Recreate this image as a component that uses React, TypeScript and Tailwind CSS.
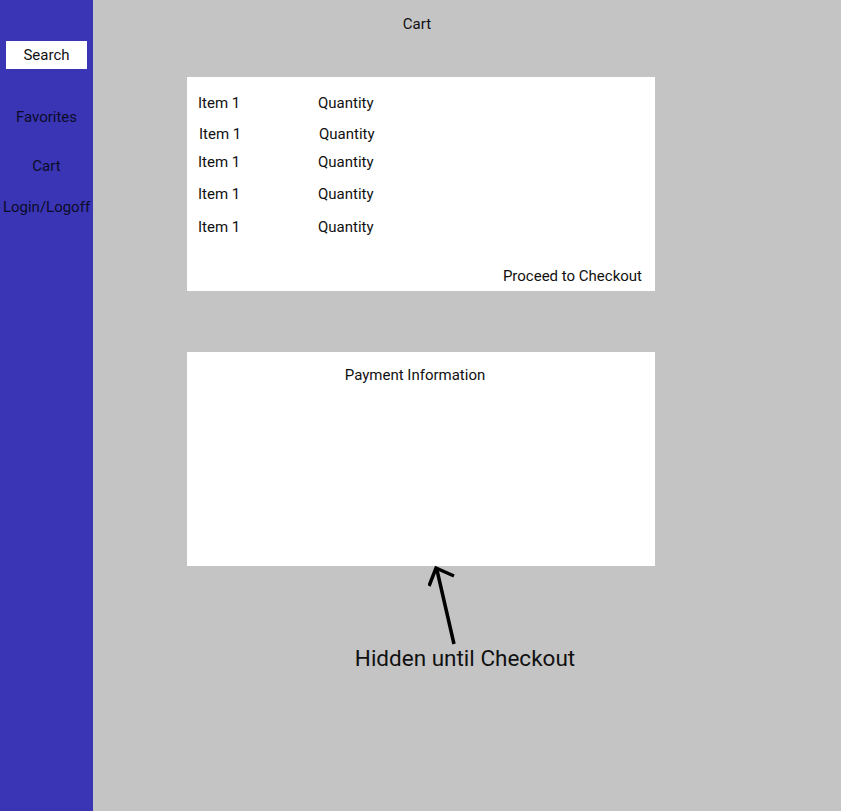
import React from 'react'

const rows = [
  { item: 'Item 1', qty: 'Quantity', mt: 'mt-0', shift: false },
  { item: 'Item 1', qty: 'Quantity', mt: 'mt-[13px]', shift: true },
  { item: 'Item 1', qty: 'Quantity', mt: 'mt-[10px]', shift: false },
  { item: 'Item 1', qty: 'Quantity', mt: 'mt-[14px]', shift: false },
  { item: 'Item 1', qty: 'Quantity', mt: 'mt-[15px]', shift: false },
]

function Sidebar() {
  return (
    <aside className="w-[93px] shrink-0 bg-[#3a35b4] flex flex-col items-center pt-[41px]">
      <div className="w-[81px] h-[28px] bg-white flex items-center justify-center text-[15px] text-[#111]">
        Search
      </div>
      <nav className="flex flex-col items-center text-[15px] leading-[18px] text-[#0c0c2a]">
        <span className="mt-[39px]">Favorites</span>
        <span className="mt-[31px]">Cart</span>
        <span className="mt-[23px]">Login/Logoff</span>
      </nav>
    </aside>
  )
}

export default function App() {
  return (
    <div
      className="flex w-[841px] h-[811px] bg-[#c4c4c4] overflow-hidden"
      style={{ fontFamily: 'Roboto, "Liberation Sans", sans-serif' }}
    >
      <Sidebar />
      <main className="relative flex-1 pl-[94px] text-[#111]">
        <h1 className="w-[468px] pr-[8px] pt-[15px] text-center text-[15px] leading-[18px] font-normal">Cart</h1>

        {/* cart items */}
        <section className="mt-[44px] w-[468px] h-[214px] bg-white pt-[17px] flex flex-col text-[15px] leading-[18px]">
          {rows.map((r, i) => (
            <div key={i} className={`flex ${r.mt} ${r.shift ? 'pl-[12px]' : 'pl-[11px]'}`}>
              <span className="w-[120px]">{r.item}</span>
              <span>{r.qty}</span>
            </div>
          ))}
          <div className="mt-[31px] pr-[13px] text-right">Proceed to Checkout</div>
        </section>

        {/* payment, hidden until checkout */}
        <section className="mt-[61px] w-[468px] h-[214px] bg-white pt-[14px] text-[15px] leading-[18px]">
          <div className="pr-[12px] text-center">Payment Information</div>
        </section>

        <div className="mt-[79px] w-[556px] text-center text-[22.5px] leading-[26px]">Hidden until Checkout</div>

        <svg className="absolute left-[335px] top-[560px]" width="40" height="90" viewBox="0 0 40 90">
          <line x1="26" y1="84" x2="8.5" y2="8" stroke="#000" strokeWidth="3.5" />
          <polyline points="1,26 8,8 26,16" fill="none" stroke="#000" strokeWidth="3.5" />
        </svg>
      </main>
    </div>
  )
}
